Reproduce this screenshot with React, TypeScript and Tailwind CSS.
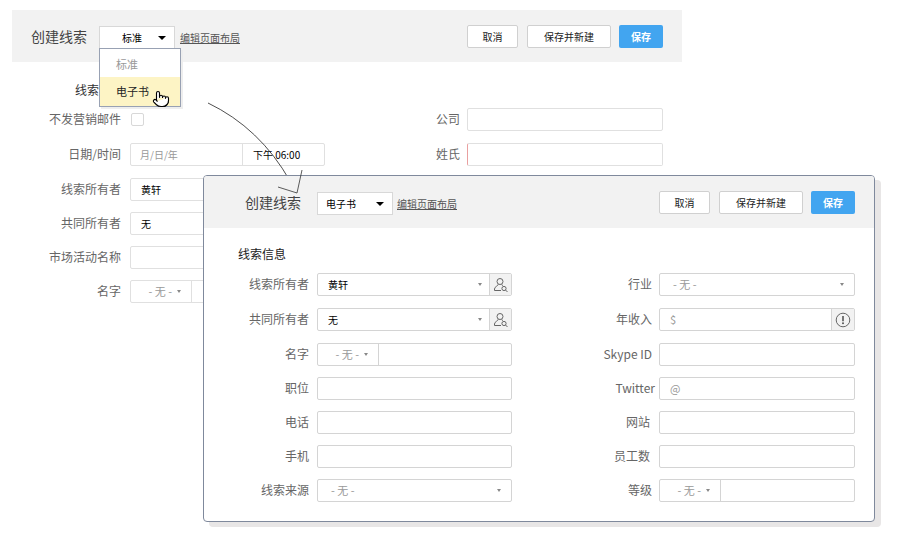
import { Pointer } from "lucide-react";
import type { ReactNode } from "react";

const FONT = "font-['Noto_Sans_CJK_SC','Liberation_Sans',sans-serif]";
const BOX = "h-[23px] border border-(--bd) rounded-[2px] bg-white flex items-center";

function SmallCaret() {
  return <span className="w-0 h-0 border-x-[2.5px] border-t-[3px] border-x-transparent border-t-[#888]" />;
}

function BigCaret() {
  return <span className="w-0 h-0 border-x-[4px] border-t-[4px] border-x-transparent border-t-black" />;
}

function PersonSearch() {
  return (
    <svg width="16" height="16" viewBox="0 0 16 16" fill="none" stroke="#666" strokeWidth="1">
      <circle cx="7" cy="4.5" r="3" />
      <path d="M5.2 7.3 C5.2 9 1.5 9.6 1.5 12 V13.5 H8" />
      <path d="M8.8 7.3 C8.8 8 9.2 8.4 9.8 8.8" />
      <circle cx="11" cy="11.5" r="2.1" />
      <path d="M12.5 13 L14.5 15" />
    </svg>
  );
}

function InfoMark() {
  return (
    <svg width="16" height="16" viewBox="0 0 16 16" fill="none">
      <circle cx="8" cy="8" r="6.8" stroke="#666" strokeWidth="1" />
      <path d="M8 4 V9.2" stroke="#555" strokeWidth="1.6" />
      <circle cx="8" cy="11.3" r="1" fill="#555" />
    </svg>
  );
}

function Lookup({ value }: { value: string }) {
  return (
    <div className={`${BOX} w-full`}>
      <span className="flex-1 pl-[10px] text-[10px] text-black">{value}</span>
      <span className="mr-[7px] flex"><SmallCaret /></span>
      <span className="w-[22px] h-full bg-[#f2f2f2] border-l border-(--bd) flex items-center justify-center">
        <PersonSearch />
      </span>
    </div>
  );
}

function NameSelect({ first }: { first: string }) {
  return (
    <div className={`${BOX} w-full`}>
      <span className={`${first} h-full border-r border-(--bd) flex items-center justify-end pr-[10px] gap-[5px] text-[11px] text-[#999]`}>
        - 无 - <SmallCaret />
      </span>
    </div>
  );
}

function Dropdown({ value }: { value: string }) {
  return (
    <div className={`${BOX} w-full`}>
      <span className="flex-1 pl-[13px] text-[11px] text-[#999]">{value}</span>
      <span className="mr-[10px] flex"><SmallCaret /></span>
    </div>
  );
}

function Empty({ prefix, error }: { prefix?: string; error?: boolean }) {
  return (
    <div className={`${BOX} w-full ${error ? "border-l-[#e9a0a0]" : ""}`}>
      {prefix && <span className="pl-[10px] text-[11px] text-[#999]">{prefix}</span>}
    </div>
  );
}

function Row({ label, labelW, gap, mt, pr, children }: { label: string; labelW: string; gap: string; mt: string; pr?: string; children: ReactNode }) {
  return (
    <div className={`flex items-center h-[23px] ${mt}`}>
      <span className={`${labelW} ${pr ?? ""} shrink-0 pb-[2px] text-right text-[12px] text-[#666] whitespace-nowrap`}>{label}</span>
      <span className={`${gap} shrink-0`} />
      <div className="flex-1 min-w-0">{children}</div>
    </div>
  );
}

function Header({ title, select, selectPl, padL, selectMl, linkMl }: { title: string; select: string; selectPl: string; padL: string; selectMl: string; linkMl: string }) {
  return (
    <div className={`h-[52px] bg-[#f2f2f2] flex items-center pr-[19px] ${padL}`}>
      <span className="text-[14px] text-[#444] whitespace-nowrap">{title}</span>
      <div className={`w-[76px] h-[23px] mt-[3px] ${selectMl} bg-white border border-[#d8d8d8] flex items-center justify-between ${selectPl} pr-[8px] text-[10px] text-black`}>
        <span>{select}</span>
        <BigCaret />
      </div>
      <span className={`${linkMl} mt-[3px] text-[10px] text-[#555] underline whitespace-nowrap`}>编辑页面布局</span>
      <div className="flex-1" />
      <button className="w-[51px] h-[23px] bg-white border border-[#d0d0d0] rounded-[2px] text-[10px] text-[#222]">取消</button>
      <button className="w-[84px] h-[23px] ml-[9px] bg-white border border-[#d0d0d0] rounded-[2px] text-[10px] text-[#222]">保存并新建</button>
      <button className="w-[44px] h-[23px] ml-[8px] bg-[#42a5f0] rounded-[2px] text-[10px] font-bold text-white">保存</button>
    </div>
  );
}

const B = { labelW: "w-[109px]", gap: "w-[9px]" };
const BR = { labelW: "w-[48px]", gap: "w-[7px]" };
const L = { labelW: "w-[105px]", gap: "w-[8px]" };
const R = { labelW: "w-[104px]", gap: "w-[7px]" };

export default function App() {
  return (
    <div className={`relative w-[910px] h-[543px] overflow-hidden bg-white ${FONT}`}>
      {/* Page behind */}
      <div className="w-[670px] ml-[12px] pt-[10px] [--bd:#e0e0e0]">
        <Header title="创建线索" select="标准" selectPl="pl-[22px]" padL="pl-[19px]" selectMl="ml-[12px]" linkMl="ml-[5px]" />
        <div className="pl-[63px] h-[36px] pt-[18px] text-[12px] leading-[20px] text-[#333]">线索信息</div>
        <div className="mt-[10px] flex">
          <div className="w-[313px] shrink-0">
            <Row label="不发营销邮件" {...B} mt="mt-0">
              <span className="block w-[13px] h-[13px] ml-[1px] border border-[#d8d8d8] rounded-[2px]" />
            </Row>
            <Row label="日期/时间" {...B} mt="mt-[12px]">
              <div className={`${BOX} w-[195px]`}>
                <span className="w-[112px] h-full flex items-center pl-[9px] border-r border-(--bd) text-[10px] text-[#999]">月/日/年</span>
                <span className="pl-[10px] text-[10px] text-black">下午 06:00</span>
              </div>
            </Row>
            <Row label="线索所有者" {...B} mt="mt-[12px]"><Lookup value="黄轩" /></Row>
            <Row label="共同所有者" {...B} mt="mt-[11px]"><Lookup value="无" /></Row>
            <Row label="市场活动名称" {...B} mt="mt-[11px]"><Empty /></Row>
            <Row label="名字" {...B} mt="mt-[11px]"><NameSelect first="w-[61px]" /></Row>
          </div>
          <div className="ml-[87px] w-[251px]">
            <Row label="公司" {...BR} mt="mt-0"><Empty /></Row>
            <Row label="姓氏" {...BR} mt="mt-[12px]"><Empty error /></Row>
          </div>
        </div>
      </div>

      {/* Connecting curve */}
      <svg className="absolute left-0 top-0 pointer-events-none" width="910" height="543" fill="none">
        <path d="M208 103 Q260 128 290 181" stroke="#222" strokeWidth="0.8" />
      </svg>

      {/* Open menu */}
      <div className="absolute left-[99px] top-[48px] w-[82px] h-[59px] bg-white border border-[#98a1b3] shadow-[2px_2px_0_#eeeeee] text-[11px]">
        <div className="h-[28px] flex items-center pl-[16px] pt-[2px] text-[#999]">标准</div>
        <div className="h-[29px] flex items-center pl-[16px] bg-[#fdf4c5] text-[#222]">电子书</div>
        <Pointer size={18} strokeWidth={1.5} fill="white" className="absolute left-[52px] top-[41px] text-black" />
      </div>

      {/* Floating panel */}
      <div className="absolute left-[203px] top-[175px] w-[672px] h-[347px] bg-white border border-[#7f899c] rounded-[4px] overflow-hidden shadow-[6px_5px_0_#e8e6e6] [--bd:#d4d4d4]">
        <Header title="创建线索" select="电子书" selectPl="pl-[8px]" padL="pl-[41px]" selectMl="ml-[16px]" linkMl="ml-[4px]" />
        <div className="pl-[34px] h-[45px] pt-[16px] text-[12px] leading-[20px] text-[#222]">线索信息</div>
        <div className="flex">
          <div className="w-[308px] shrink-0">
            <Row label="线索所有者" {...L} mt="mt-0"><Lookup value="黄轩" /></Row>
            <Row label="共同所有者" {...L} mt="mt-[12px]"><Lookup value="无" /></Row>
            <Row label="名字" {...L} mt="mt-[12px]"><NameSelect first="w-[61px]" /></Row>
            <Row label="职位" {...L} mt="mt-[11px]"><Empty /></Row>
            <Row label="电话" {...L} mt="mt-[11px]"><Empty /></Row>
            <Row label="手机" {...L} mt="mt-[11px]"><Empty /></Row>
            <Row label="线索来源" {...L} mt="mt-[11px]"><Dropdown value="- 无 -" /></Row>
          </div>
          <div className="ml-[36px] w-[307px]">
            <Row label="行业" {...R} mt="mt-0"><Dropdown value="- 无 -" /></Row>
            <Row label="年收入" {...R} mt="mt-[12px]">
              <div className={`${BOX} w-full`}>
                <span className="flex-1 pl-[10px] text-[11px] text-[#999]">$</span>
                <span className="w-[23px] h-full bg-[#f2f2f2] border-l border-(--bd) flex items-center justify-center">
                  <InfoMark />
                </span>
              </div>
            </Row>
            <Row label="Skype ID" {...R} mt="mt-[12px]"><Empty /></Row>
            <Row label="Twitter" labelW="w-[107px]" gap="w-[4px]" mt="mt-[11px]"><Empty prefix="@" /></Row>
            <Row label="网站" {...R} pr="pr-[2px]" mt="mt-[11px]"><Empty /></Row>
            <Row label="员工数" {...R} pr="pr-[2px]" mt="mt-[11px]"><Empty /></Row>
            <Row label="等级" {...R} mt="mt-[11px]"><NameSelect first="w-[61px]" /></Row>
          </div>
        </div>
      </div>

      {/* Arrow head */}
      <svg className="absolute left-0 top-0 pointer-events-none" width="910" height="543" fill="none">
        <path d="M278 187 L297 193 L302 170" stroke="#333" strokeWidth="0.8" />
      </svg>
    </div>
  );
}
